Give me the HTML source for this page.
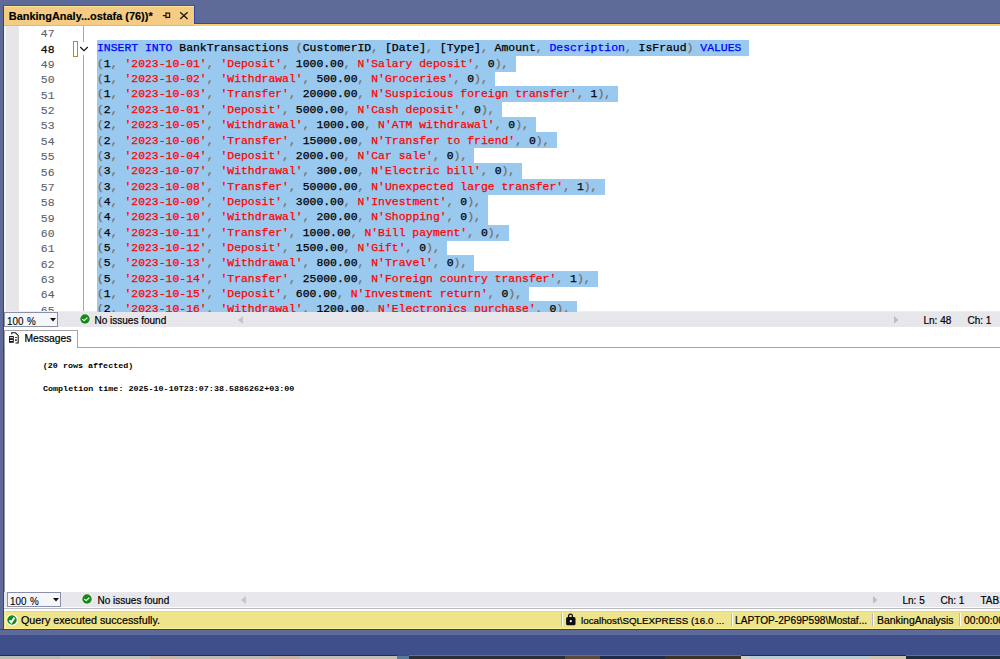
<!DOCTYPE html>
<html><head><meta charset="utf-8"><style>
*{margin:0;padding:0;box-sizing:border-box}
html,body{width:1000px;height:659px;overflow:hidden;background:#5e6b98;position:relative;font-family:"Liberation Sans",sans-serif}
.a{position:absolute}
.ln{position:absolute;left:19px;width:35.5px;text-align:right;font-family:"Liberation Mono",monospace;font-size:11.43px;line-height:15.36px;height:15.36px;color:#5c606c;white-space:pre;-webkit-text-stroke:0.1px #5c606c}
.ln.cur{color:#111;-webkit-text-stroke:0.3px #111}
.code{position:absolute;left:97.0px;font-family:"Liberation Mono",monospace;font-size:11.43px;line-height:15.36px;height:15.36px;color:#000;white-space:pre;z-index:3;-webkit-text-stroke:0.25px currentColor}
.sel{position:absolute;left:97.0px;height:16.0px;background:#99c9ef;z-index:2}
b{font-weight:normal}
b.k{color:#0000ff} b.s{color:#ff0000} b.p{color:#786c60}
.st{font-size:10px;color:#000;white-space:pre;position:absolute;line-height:12px;-webkit-text-stroke:0.2px #000}
.mono8{font-family:"Liberation Mono",monospace;font-size:8.4px;font-weight:bold;color:#000;white-space:pre;position:absolute;line-height:10px;transform:scaleY(0.86);transform-origin:0 8px}
</style></head><body>
<!-- top frame -->
<div class="a" style="left:0;top:0;width:1000px;height:23px;background:#5e6b98"></div>
<div class="a" style="left:0;top:23px;width:1000px;height:1px;background:#3346a0"></div>
<div class="a" style="left:0;top:24px;width:1000px;height:2px;background:#f7cf6e"></div>
<!-- left frame -->
<div class="a" style="left:0;top:0;width:3px;height:630px;background:#5e6b98"></div>
<div class="a" style="left:3px;top:6px;width:1px;height:623px;background:#33418c"></div>
<!-- tab -->
<div class="a" style="left:3px;top:5px;width:192px;height:1px;background:#4152a0"></div>
<div class="a" style="left:194px;top:5px;width:1px;height:19px;background:#3346a0"></div>
<div class="a" style="left:4px;top:6px;width:190px;height:20px;background:#f5cc84;border-top:1px solid #ffe596;border-bottom:1px solid #f2b64e"></div>
<div class="a" style="left:8.8px;top:9.9px;font-weight:bold;font-size:10.95px;line-height:13px;color:#000;white-space:pre;-webkit-text-stroke:0.15px #000">BankingAnaly...ostafa (76))*</div>
<svg class="a" style="left:160px;top:10px" width="12" height="10" viewBox="0 0 12 10"><path d="M2.8 5.5h3.2M6 2.3v6M6 3.2h3.6v4.1H6" stroke="#24180c" stroke-width="1.25" fill="none"/></svg>
<svg class="a" style="left:179px;top:11px" width="10" height="9" viewBox="0 0 10 9"><path d="M1.2 1.3l7.4 6.6M8.6 1.3l-7.4 6.6" stroke="#24180c" stroke-width="1.35" fill="none"/></svg>
<!-- editor -->
<div class="a" style="left:4px;top:26px;width:996px;height:286px;background:#fff;overflow:hidden">
</div>
<div class="a" style="left:4px;top:26px;width:2px;height:286px;background:#f4f4f6"></div>
<div class="a" style="left:6px;top:26px;width:13px;height:286px;background:#e6e6e9"></div>
<div class="a" style="left:83px;top:26px;width:1px;height:16px;background:#a9a9ad"></div>
<div class="a" style="left:83px;top:55px;width:1px;height:257px;background:#a9a9ad"></div>
<div class="a" style="left:73.2px;top:41px;width:4.8px;height:15.8px;border:1px solid #b88a22;background:#fff"></div>
<svg class="a" style="left:79px;top:45px" width="10" height="7" viewBox="0 0 10 7"><path d="M1.2 2l3.8 3.7 3.8-3.7" stroke="#0a0a0a" stroke-width="1.05" fill="none"/></svg>
<div class="a" style="left:4px;top:26px;width:996px;height:286px;overflow:hidden">
<div style="position:relative;left:-4px;top:-26px;width:1000px;height:312px">
<div class="ln" style="top:26.30px">47</div>
<div class="code" style="top:25.00px"></div>
<div class="ln cur" style="top:41.66px">48</div>
<div class="sel" style="top:40.26px;width:651.79px"></div>
<div class="code" style="top:40.36px"><b class="k">INSERT</b> <b class="k">INTO</b> BankTransactions <b class="p">(</b>CustomerID<b class="p">,</b> [Date]<b class="p">,</b> [Type]<b class="p">,</b> Amount<b class="p">,</b> <b class="k">Description</b><b class="p">,</b> IsFraud<b class="p">)</b> <b class="k">VALUES</b></div>
<div class="ln" style="top:57.02px">49</div>
<div class="sel" style="top:55.62px;width:418.52px"></div>
<div class="code" style="top:55.72px"><b class="p">(</b>1<b class="p">,</b> <b class="s">&#x27;2023-10-01&#x27;</b><b class="p">,</b> <b class="s">&#x27;Deposit&#x27;</b><b class="p">,</b> 1000.00<b class="p">,</b> <b class="s">N&#x27;Salary deposit&#x27;</b><b class="p">,</b> 0<b class="p">)</b><b class="p">,</b></div>
<div class="ln" style="top:72.38px">50</div>
<div class="sel" style="top:70.98px;width:397.94px"></div>
<div class="code" style="top:71.08px"><b class="p">(</b>1<b class="p">,</b> <b class="s">&#x27;2023-10-02&#x27;</b><b class="p">,</b> <b class="s">&#x27;Withdrawal&#x27;</b><b class="p">,</b> 500.00<b class="p">,</b> <b class="s">N&#x27;Groceries&#x27;</b><b class="p">,</b> 0<b class="p">)</b><b class="p">,</b></div>
<div class="ln" style="top:87.74px">51</div>
<div class="sel" style="top:86.34px;width:521.44px"></div>
<div class="code" style="top:86.44px"><b class="p">(</b>1<b class="p">,</b> <b class="s">&#x27;2023-10-03&#x27;</b><b class="p">,</b> <b class="s">&#x27;Transfer&#x27;</b><b class="p">,</b> 20000.00<b class="p">,</b> <b class="s">N&#x27;Suspicious foreign transfer&#x27;</b><b class="p">,</b> 1<b class="p">)</b><b class="p">,</b></div>
<div class="ln" style="top:103.10px">52</div>
<div class="sel" style="top:101.70px;width:404.80px"></div>
<div class="code" style="top:101.80px"><b class="p">(</b>2<b class="p">,</b> <b class="s">&#x27;2023-10-01&#x27;</b><b class="p">,</b> <b class="s">&#x27;Deposit&#x27;</b><b class="p">,</b> 5000.00<b class="p">,</b> <b class="s">N&#x27;Cash deposit&#x27;</b><b class="p">,</b> 0<b class="p">)</b><b class="p">,</b></div>
<div class="ln" style="top:118.46px">53</div>
<div class="sel" style="top:117.06px;width:439.10px"></div>
<div class="code" style="top:117.16px"><b class="p">(</b>2<b class="p">,</b> <b class="s">&#x27;2023-10-05&#x27;</b><b class="p">,</b> <b class="s">&#x27;Withdrawal&#x27;</b><b class="p">,</b> 1000.00<b class="p">,</b> <b class="s">N&#x27;ATM withdrawal&#x27;</b><b class="p">,</b> 0<b class="p">)</b><b class="p">,</b></div>
<div class="ln" style="top:133.82px">54</div>
<div class="sel" style="top:132.42px;width:459.69px"></div>
<div class="code" style="top:132.52px"><b class="p">(</b>2<b class="p">,</b> <b class="s">&#x27;2023-10-06&#x27;</b><b class="p">,</b> <b class="s">&#x27;Transfer&#x27;</b><b class="p">,</b> 15000.00<b class="p">,</b> <b class="s">N&#x27;Transfer to friend&#x27;</b><b class="p">,</b> 0<b class="p">)</b><b class="p">,</b></div>
<div class="ln" style="top:149.18px">55</div>
<div class="sel" style="top:147.78px;width:377.35px"></div>
<div class="code" style="top:147.88px"><b class="p">(</b>3<b class="p">,</b> <b class="s">&#x27;2023-10-04&#x27;</b><b class="p">,</b> <b class="s">&#x27;Deposit&#x27;</b><b class="p">,</b> 2000.00<b class="p">,</b> <b class="s">N&#x27;Car sale&#x27;</b><b class="p">,</b> 0<b class="p">)</b><b class="p">,</b></div>
<div class="ln" style="top:164.54px">56</div>
<div class="sel" style="top:163.14px;width:425.38px"></div>
<div class="code" style="top:163.24px"><b class="p">(</b>3<b class="p">,</b> <b class="s">&#x27;2023-10-07&#x27;</b><b class="p">,</b> <b class="s">&#x27;Withdrawal&#x27;</b><b class="p">,</b> 300.00<b class="p">,</b> <b class="s">N&#x27;Electric bill&#x27;</b><b class="p">,</b> 0<b class="p">)</b><b class="p">,</b></div>
<div class="ln" style="top:179.90px">57</div>
<div class="sel" style="top:178.50px;width:507.71px"></div>
<div class="code" style="top:178.60px"><b class="p">(</b>3<b class="p">,</b> <b class="s">&#x27;2023-10-08&#x27;</b><b class="p">,</b> <b class="s">&#x27;Transfer&#x27;</b><b class="p">,</b> 50000.00<b class="p">,</b> <b class="s">N&#x27;Unexpected large transfer&#x27;</b><b class="p">,</b> 1<b class="p">)</b><b class="p">,</b></div>
<div class="ln" style="top:195.26px">58</div>
<div class="sel" style="top:193.86px;width:391.08px"></div>
<div class="code" style="top:193.96px"><b class="p">(</b>4<b class="p">,</b> <b class="s">&#x27;2023-10-09&#x27;</b><b class="p">,</b> <b class="s">&#x27;Deposit&#x27;</b><b class="p">,</b> 3000.00<b class="p">,</b> <b class="s">N&#x27;Investment&#x27;</b><b class="p">,</b> 0<b class="p">)</b><b class="p">,</b></div>
<div class="ln" style="top:210.62px">59</div>
<div class="sel" style="top:209.22px;width:391.08px"></div>
<div class="code" style="top:209.32px"><b class="p">(</b>4<b class="p">,</b> <b class="s">&#x27;2023-10-10&#x27;</b><b class="p">,</b> <b class="s">&#x27;Withdrawal&#x27;</b><b class="p">,</b> 200.00<b class="p">,</b> <b class="s">N&#x27;Shopping&#x27;</b><b class="p">,</b> 0<b class="p">)</b><b class="p">,</b></div>
<div class="ln" style="top:225.98px">60</div>
<div class="sel" style="top:224.58px;width:411.66px"></div>
<div class="code" style="top:224.68px"><b class="p">(</b>4<b class="p">,</b> <b class="s">&#x27;2023-10-11&#x27;</b><b class="p">,</b> <b class="s">&#x27;Transfer&#x27;</b><b class="p">,</b> 1000.00<b class="p">,</b> <b class="s">N&#x27;Bill payment&#x27;</b><b class="p">,</b> 0<b class="p">)</b><b class="p">,</b></div>
<div class="ln" style="top:241.34px">61</div>
<div class="sel" style="top:239.94px;width:349.91px"></div>
<div class="code" style="top:240.04px"><b class="p">(</b>5<b class="p">,</b> <b class="s">&#x27;2023-10-12&#x27;</b><b class="p">,</b> <b class="s">&#x27;Deposit&#x27;</b><b class="p">,</b> 1500.00<b class="p">,</b> <b class="s">N&#x27;Gift&#x27;</b><b class="p">,</b> 0<b class="p">)</b><b class="p">,</b></div>
<div class="ln" style="top:256.70px">62</div>
<div class="sel" style="top:255.30px;width:377.35px"></div>
<div class="code" style="top:255.40px"><b class="p">(</b>5<b class="p">,</b> <b class="s">&#x27;2023-10-13&#x27;</b><b class="p">,</b> <b class="s">&#x27;Withdrawal&#x27;</b><b class="p">,</b> 800.00<b class="p">,</b> <b class="s">N&#x27;Travel&#x27;</b><b class="p">,</b> 0<b class="p">)</b><b class="p">,</b></div>
<div class="ln" style="top:272.06px">63</div>
<div class="sel" style="top:270.66px;width:500.85px"></div>
<div class="code" style="top:270.76px"><b class="p">(</b>5<b class="p">,</b> <b class="s">&#x27;2023-10-14&#x27;</b><b class="p">,</b> <b class="s">&#x27;Transfer&#x27;</b><b class="p">,</b> 25000.00<b class="p">,</b> <b class="s">N&#x27;Foreign country transfer&#x27;</b><b class="p">,</b> 1<b class="p">)</b><b class="p">,</b></div>
<div class="ln" style="top:287.42px">64</div>
<div class="sel" style="top:286.02px;width:432.24px"></div>
<div class="code" style="top:286.12px"><b class="p">(</b>1<b class="p">,</b> <b class="s">&#x27;2023-10-15&#x27;</b><b class="p">,</b> <b class="s">&#x27;Deposit&#x27;</b><b class="p">,</b> 600.00<b class="p">,</b> <b class="s">N&#x27;Investment return&#x27;</b><b class="p">,</b> 0<b class="p">)</b><b class="p">,</b></div>
<div class="ln" style="top:302.78px">65</div>
<div class="sel" style="top:301.38px;width:480.27px"></div>
<div class="code" style="top:301.48px"><b class="p">(</b>2<b class="p">,</b> <b class="s">&#x27;2023-10-16&#x27;</b><b class="p">,</b> <b class="s">&#x27;Withdrawal&#x27;</b><b class="p">,</b> 1200.00<b class="p">,</b> <b class="s">N&#x27;Electronics purchase&#x27;</b><b class="p">,</b> 0<b class="p">)</b><b class="p">,</b></div>
</div></div>
<!-- status bar 1 -->
<div class="a" style="left:4px;top:311.2px;width:996px;height:15.8px;background:#e6e6eb;border-top:1.2px solid #eeeef2"></div>
<div class="a" style="left:4px;top:312px;width:54px;height:15px;background:#f5f6fa;border:1px solid #8a90a8"></div>
<div class="st" style="left:7.3px;top:314.6px;font-size:10.6px;transform:scaleX(0.93);word-spacing:1px;transform-origin:0 0;-webkit-text-stroke:0.1px #000">100 %</div>
<svg class="a" style="left:50px;top:318px" width="6" height="4" viewBox="0 0 6 4"><path d="M0 0h6l-3 3.5z" fill="#111"/></svg>
<svg class="a" style="left:78.6px;top:313.2px" width="12" height="12" viewBox="0 0 12 12"><circle cx="6" cy="6" r="5.5" fill="#fafafc" opacity="0.6"/><circle cx="6" cy="6" r="4.7" fill="#158a18"/><path d="M3.6 6.4l1.5 1.2 2.9-2.6" stroke="#fff" stroke-width="1.15" fill="none" stroke-linecap="round"/></svg>
<div class="st" style="left:94.5px;top:314.7px">No issues found</div>
<svg class="a" style="left:238px;top:316px" width="6" height="8" viewBox="0 0 6 8"><path d="M5 0v8l-5-4z" fill="#c4c4cc"/></svg>
<svg class="a" style="left:893.8px;top:316.4px" width="5" height="8" viewBox="0 0 5 8"><path d="M0 0v7.8l4.3-3.9z" fill="#bcbcc4"/></svg>
<div class="st" style="left:923.5px;top:314.7px">Ln: 48</div>
<div class="st" style="left:967.5px;top:314.7px">Ch: 1</div>
<!-- results -->
<div class="a" style="left:4px;top:327px;width:996px;height:265px;background:#fff"></div>
<div class="a" style="left:4px;top:330px;width:74px;height:18px;border:1px solid #a4a4a8;border-bottom:none;background:#fff"></div>
<div class="a" style="left:77px;top:347px;width:923px;height:1px;background:#a4a4a8"></div>
<div class="a" style="left:4px;top:347px;width:1px;height:245px;background:#9a96a4"></div>
<svg class="a" style="left:6px;top:329px" width="18" height="18" viewBox="0 0 18 18"><path d="M5.7 5.2V3.8h3.8l2.7 2.6v7.6H9.5" stroke="#111" stroke-width="1.05" fill="none"/><rect x="3" y="7" width="4.8" height="6.8" rx="0.6" fill="#111"/><rect x="3.8" y="8.2" width="3.2" height="1" fill="#fff"/><rect x="3.8" y="10.9" width="3.2" height="1" fill="#fff"/><rect x="9" y="8" width="2" height="0.9" fill="#222"/><rect x="9" y="10.3" width="1.8" height="1.6" fill="#222"/></svg>
<div class="st" style="left:24.5px;top:333.3px;font-size:10.3px">Messages</div>
<div class="mono8" style="left:42.8px;top:360.5px">(20 rows affected)</div>
<div class="mono8" style="left:43px;top:384.4px">Completion time: 2025-10-10T23:07:38.5886262+03:00</div>
<!-- status bar 2 -->
<div class="a" style="left:4px;top:592px;width:996px;height:14.5px;background:#e7e7ec"></div>
<div class="a" style="left:7px;top:592px;width:54px;height:15px;background:#f5f6fa;border:1px solid #8a90a8"></div>
<div class="st" style="left:10.3px;top:594.6px;font-size:10.6px;transform:scaleX(0.93);word-spacing:1px;transform-origin:0 0;-webkit-text-stroke:0.1px #000">100 %</div>
<svg class="a" style="left:53px;top:598px" width="6" height="4" viewBox="0 0 6 4"><path d="M0 0h6l-3 3.5z" fill="#111"/></svg>
<svg class="a" style="left:81.4px;top:593px" width="12" height="12" viewBox="0 0 12 12"><circle cx="6" cy="6" r="5.5" fill="#fafafc" opacity="0.6"/><circle cx="6" cy="6" r="4.7" fill="#158a18"/><path d="M3.6 6.4l1.5 1.2 2.9-2.6" stroke="#fff" stroke-width="1.15" fill="none" stroke-linecap="round"/></svg>
<div class="st" style="left:97.5px;top:594.7px">No issues found</div>
<svg class="a" style="left:241px;top:596px" width="6" height="8" viewBox="0 0 6 8"><path d="M5 0v8l-5-4z" fill="#c4c4cc"/></svg>
<svg class="a" style="left:872.8px;top:596.4px" width="5" height="8" viewBox="0 0 5 8"><path d="M0 0v7.8l4.3-3.9z" fill="#bcbcc4"/></svg>
<div class="st" style="left:902.5px;top:594.7px">Ln: 5</div>
<div class="st" style="left:940.5px;top:594.7px">Ch: 1</div>
<div class="st" style="left:980.5px;top:594.7px">TABS</div>
<div class="a" style="left:4px;top:606.5px;width:996px;height:4.5px;background:#fdfdfd"></div>
<div class="a" style="left:4px;top:607.8px;width:996px;height:1.1px;background:#bcbcbe"></div>
<!-- yellow status -->
<div class="a" style="left:4px;top:611px;width:996px;height:17.5px;background:#eee48c;border-top:1px solid #e8db68;border-bottom:1.5px solid #fdf08c"></div>
<div class="a" style="left:5px;top:611px;width:1px;height:17.5px;background:#fbf3a0"></div>
<svg class="a" style="left:6.1px;top:613.9px" width="12" height="12" viewBox="0 0 12 12"><circle cx="6" cy="6" r="5.3" fill="#138a16" stroke="#fff" stroke-width="1.1"/><path d="M3.5 6.3L5.3 8.4L8.5 3.6" stroke="#fff" stroke-width="1.9" fill="none" stroke-linejoin="miter"/></svg>
<div class="st" style="left:21px;top:613.8px;font-size:10.75px;color:#000">Query executed successfully.</div>
<div class="a" style="left:561px;top:613.3px;width:2px;height:12.3px;background:linear-gradient(90deg,#b8b0e8 50%,#fff 50%)"></div>
<svg class="a" style="left:565px;top:613px" width="12" height="13" viewBox="0 0 12 13"><path d="M3.6 4.6V3.1a1.9 1.9 0 0 1 3.8 0V4.6" stroke="#111" stroke-width="1.3" fill="none"/><rect x="1.1" y="4" width="9.4" height="8.3" rx="1.6" fill="#0c0c14"/><circle cx="5.8" cy="8.2" r="1.1" fill="#fff"/></svg>
<div class="st" style="left:581px;top:615px;font-size:9.8px;color:#000">localhost\SQLEXPRESS (16.0 ...</div>
<div class="a" style="left:730.5px;top:613.3px;width:2px;height:12.3px;background:linear-gradient(90deg,#b8b0e8 50%,#fff 50%)"></div>
<div class="st" style="left:735px;top:615px;font-size:10.15px;color:#000">LAPTOP-2P69P598\Mostaf...</div>
<div class="a" style="left:872px;top:613.3px;width:2px;height:12.3px;background:linear-gradient(90deg,#b8b0e8 50%,#fff 50%)"></div>
<div class="st" style="left:877px;top:615px;font-size:10.45px;color:#000">BankingAnalysis</div>
<div class="a" style="left:959px;top:613.3px;width:2px;height:12.3px;background:linear-gradient(90deg,#b8b0e8 50%,#fff 50%)"></div>
<div class="st" style="left:964px;top:615px;font-size:10.25px;color:#000">00:00:00</div>
<!-- bottom frame -->
<div class="a" style="left:0;top:628.5px;width:1000px;height:1.5px;background:#2c3f99"></div>
<div class="a" style="left:0;top:630px;width:1000px;height:4.5px;background:#5e6a9a"></div>
<div class="a" style="left:0;top:634.5px;width:1000px;height:20px;background:#3f4f8c"></div>
<div class="a" style="left:0;top:654.5px;width:1000px;height:1.5px;background:linear-gradient(90deg,#132a8e 0.0%,#132a8e 39.7%,#3448a8 39.7%,#3448a8 40.9%,#5a6ac4 40.9%,#5a6ac4 74.1%,#132a8e 74.1%,#132a8e 90.6%,#5a6ac4 90.6%,#5a6ac4 100.0%)"></div>
<div class="a" style="left:0;top:656px;width:1000px;height:3px;background:linear-gradient(90deg,#b9bcb4 0.0%,#b9bcb4 6.0%,#c2c4bc 6.0%,#c2c4bc 15.0%,#c8b8a8 15.0%,#c8b8a8 17.5%,#bcbcb2 17.5%,#bcbcb2 27.0%,#c8b4a4 27.0%,#c8b4a4 30.0%,#c0c0b6 30.0%,#c0c0b6 39.7%,#5a7898 39.7%,#5a7898 40.9%,#2a2e36 40.9%,#2a2e36 56.5%,#5a4a3c 56.5%,#5a4a3c 60.0%,#1e2a48 60.0%,#1e2a48 66.5%,#3a3226 66.5%,#3a3226 74.1%,#d0d0c8 74.1%,#d0d0c8 75.0%,#b8ccd4 75.0%,#b8ccd4 87.0%,#cdc6b0 87.0%,#cdc6b0 90.6%,#1e2c40 90.6%,#1e2c40 100.0%)"></div>
</body></html>
